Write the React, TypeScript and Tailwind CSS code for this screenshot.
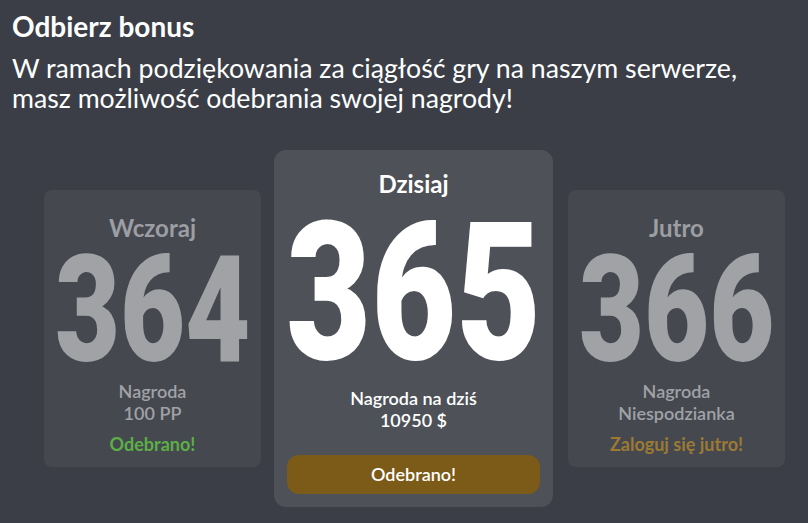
import React from "react";

const lato = { fontFamily: "Lato, 'Noto Sans', sans-serif" };
const digits = { fontFamily: "Roboto, 'Liberation Sans', sans-serif" };

function SideCard({
  label,
  day,
  lines,
  status,
  statusClass,
}: {
  label: string;
  day: string;
  lines: string[];
  status: string;
  statusClass: string;
}) {
  return (
    <div className="w-[217px] h-[277px] rounded-[8px] bg-[#45484f] pt-[23px] flex flex-col items-center">
      <div className="text-[24px] leading-[29px] font-bold text-[#9c9ea3]">{label}</div>
      <div className="mt-[14px] w-full flex justify-center">
        <span
          className="block text-[148px] leading-[110px] font-black text-[#a0a2a6] scale-x-[0.76] whitespace-nowrap"
          style={digits}
        >
          {day}
        </span>
      </div>
      <div className="mt-[14px] text-[18px] leading-[22px] font-semibold text-[#a0a2a6] text-center">
        {lines.map((l) => (
          <div key={l}>{l}</div>
        ))}
      </div>
      <div className={`mt-[9px] text-[18px] leading-[22px] font-bold ${statusClass}`}>{status}</div>
    </div>
  );
}

export default function App() {
  return (
    <div className="w-full h-[523px] bg-[#3b3e46] overflow-hidden" style={lato}>
      <div className="pl-[12px] pt-[10px]">
        <h1 className="text-[28px] leading-[32px] font-bold text-white">Odbierz bonus</h1>
        <p className="mt-[11px] text-[26.7px] leading-[30px] text-white">
          W ramach podziękowania za ciągłość gry na naszym serwerze,
          <br />
          masz możliwość odebrania swojej nagrody!
        </p>
      </div>

      <div className="mt-[37px] pl-[44px] flex items-center">
        <SideCard
          label="Wczoraj"
          day="364"
          lines={["Nagroda", "100 PP"]}
          status="Odebrano!"
          statusClass="text-[#5cae46]"
        />

        <div className="ml-[13px] w-[279px] h-[357px] rounded-[12px] bg-[#4e5157] pt-[19px] px-[13px] flex flex-col items-center">
          <div className="text-[24px] leading-[29px] font-bold text-white">Dzisiaj</div>
          <div className="mt-[24px] w-full flex justify-center">
            <span
              className="block text-[193px] leading-[142px] font-black text-white scale-x-[0.76] whitespace-nowrap"
              style={digits}
            >
              365
            </span>
          </div>
          <div className="mt-[23px] text-[18px] leading-[22px] font-semibold text-white text-center">
            <div>Nagroda na dziś</div>
            <div>10950 $</div>
          </div>
          <button className="mt-[24px] w-full h-[39px] rounded-[12px] bg-[#7c5a17] text-[18px] font-semibold text-white">
            Odebrano!
          </button>
        </div>

        <div className="ml-[15px]">
          <SideCard
            label="Jutro"
            day="366"
            lines={["Nagroda", "Niespodzianka"]}
            status="Zaloguj się jutro!"
            statusClass="text-[#9c7a34]"
          />
        </div>
      </div>
    </div>
  );
}
